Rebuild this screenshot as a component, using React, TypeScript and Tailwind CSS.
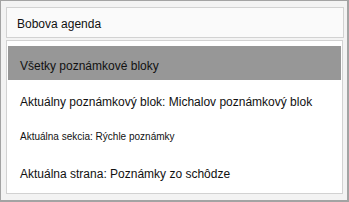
import React from "react";

const rows = [
  { text: "Všetky poznámkové bloky", cls: "text-[12px] pt-[13px]", active: true },
  { text: "Aktuálny poznámkový blok: Michalov poznámkový blok", cls: "text-[12px] pt-[13px]", active: false },
  { text: "Aktuálna sekcia: Rýchle poznámky", cls: "text-[10px] pt-[11px]", active: false },
  { text: "Aktuálna strana: Poznámky zo schôdze", cls: "text-[12px] pt-[13px]", active: false },
];

export default function App() {
  return (
    <div
      className="w-[349px] h-[202px] bg-[#f3f3f3] border-t border-l border-r-2 border-b-2 border-[#a3a3a3] pl-[5px] pt-[6px] flex flex-col"
      style={{ fontFamily: '"Liberation Sans", Arial, sans-serif' }}
    >
      <div className="w-[338px] h-[31px] border border-[#d2d2d2] bg-[#fafafa] pl-[10px] pt-[9px] text-[12px] leading-[15px] text-[#111]">
        Bobova agenda
      </div>
      <div className="mt-[2px] w-[337px] h-[154px] border border-[#d2d2d2] bg-white px-[1px] pt-[5px] flex flex-col">
        {rows.map((r) => (
          <div key={r.text} className="h-[36px] shrink-0">
            <div
              className={`h-[34px] pl-[12px] leading-[15px] text-[#111] whitespace-nowrap ${r.cls} ${r.active ? "bg-[#979797]" : ""}`}
            >
              {r.text}
            </div>
          </div>
        ))}
      </div>
    </div>
  );
}
